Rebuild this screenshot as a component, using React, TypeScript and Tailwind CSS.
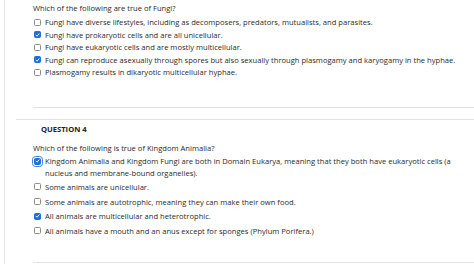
import React from 'react';

type Option = { text: string; checked?: boolean; focused?: boolean };

const fungiOptions: Option[] = [
  { text: 'Fungi have diverse lifestyles, including as decomposers, predators, mutualists, and parasites.' },
  { text: 'Fungi have prokaryotic cells and are all unicellular.', checked: true },
  { text: 'Fungi have eukaryotic cells and are mostly multicellular.' },
  { text: 'Fungi can reproduce asexually through spores but also sexually through plasmogamy and karyogamy in the hyphae.', checked: true },
  { text: 'Plasmogamy results in dikaryotic multicellular hyphae.' },
];

const animaliaOptions: Option[] = [
  { text: 'Some animals are unicellular.' },
  { text: 'Some animals are autotrophic, meaning they can make their own food.' },
  { text: 'All animals are multicellular and heterotrophic.', checked: true },
  { text: 'All animals have a mouth and an anus except for sponges (Phylum Porifera.)' },
];

function Box({ checked, focused }: { checked?: boolean; focused?: boolean }) {
  return (
    <span
      className={`shrink-0 w-[7px] h-[7px] rounded-[1.5px] flex items-center justify-center ${
        checked ? 'bg-[#1f6fd8] border border-[#1f6fd8]' : 'bg-white border border-[#8a8a8a]'
      } ${focused ? 'outline-[1.5px] outline-solid outline-[#3b82e0] outline-offset-[1px]' : ''}`}
    >
      {checked && (
        <svg viewBox="0 0 10 10" className="w-[6px] h-[6px]">
          <path d="M2 5.2 L4.2 7.4 L8.2 2.6" fill="none" stroke="white" strokeWidth="1.8" strokeLinecap="round" strokeLinejoin="round" />
        </svg>
      )}
    </span>
  );
}

export default function App() {
  return (
    <div
      className="w-[474px] h-[264px] bg-white overflow-hidden pl-[4px] text-[7.6px] text-[#2a2a2a]"
      style={{ fontFamily: '"Open Sans", "Liberation Sans", sans-serif' }}
    >
      <div className="h-full border-l border-[#e6e6e6] flex flex-col">
        {/* Previous question */}
        <div className="ml-[28px]">
          <div className="mt-[2px] h-[12px] leading-[12px]">Which of the following are true of Fungi?</div>
          <div className="mt-[2px] flex flex-col">
            {fungiOptions.map((o) => (
              <div key={o.text} className="h-[12.5px] flex items-center gap-[4px] pl-[1px] whitespace-nowrap">
                <Box checked={o.checked} />
                <span className="leading-[12px]">{o.text}</span>
              </div>
            ))}
          </div>
          <div className="mt-[28px] border-t border-[#e2e2e2]" />
        </div>

        {/* Question 4 */}
        <div className="ml-[11px] mt-[11px] border-t border-[#e2e2e2]">
          <div className="pl-[25px] mt-[3px] h-[12px] leading-[12px] font-bold text-[#222]">QUESTION 4</div>
          <div className="ml-[17px]">
            <div className="mt-[7px] h-[12px] leading-[12px]">Which of the following is true of Kingdom Animalia?</div>
            <div className="mt-[1px] flex gap-[4px] pl-[1px]">
              <span className="pt-[3px]">
                <Box checked focused />
              </span>
              <span className="leading-[12px] whitespace-nowrap">
                Kingdom Animalia and Kingdom Fungi are both in Domain Eukarya, meaning that they both have eukaryotic cells (a
                <br />
                nucleus and membrane-bound organelles).
              </span>
            </div>
            <div className="mt-[1px] flex flex-col">
              {animaliaOptions.map((o) => (
                <div key={o.text} className="h-[14.7px] flex items-center gap-[4px] pl-[1px] whitespace-nowrap">
                  <Box checked={o.checked} />
                  <span className="leading-[12px]">{o.text}</span>
                </div>
              ))}
            </div>
            <div className="mt-[24px] border-t border-[#e2e2e2]" />
          </div>
        </div>
      </div>
    </div>
  );
}
